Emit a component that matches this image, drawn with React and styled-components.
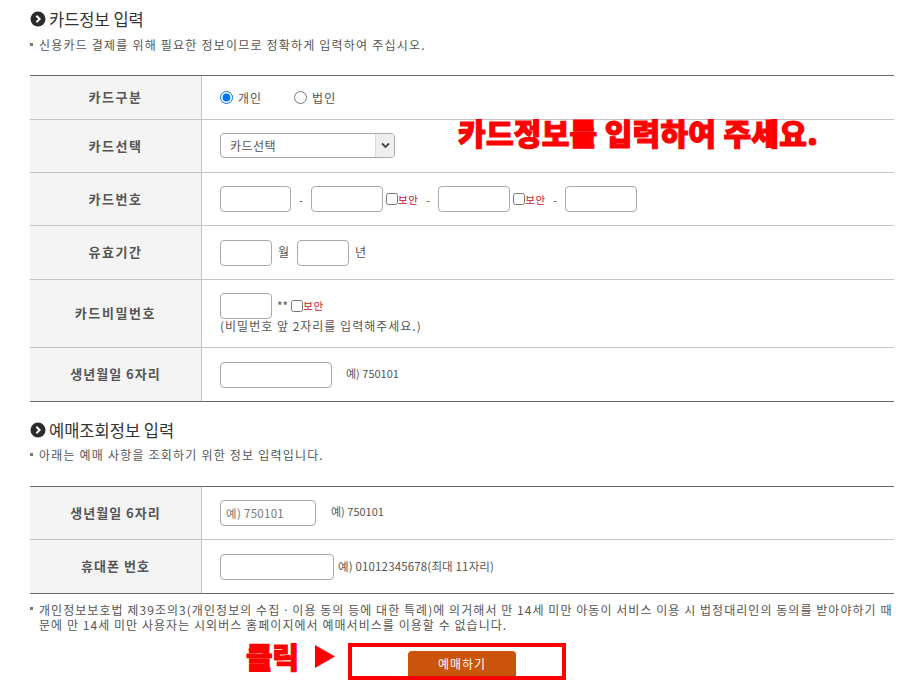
import React from "react";
import styled, { createGlobalStyle } from "styled-components";

const Global = createGlobalStyle`
  html, body { margin: 0; padding: 0; background: #fff; height: 680px; overflow: hidden; }
  body { font-family: "Noto Sans CJK KR", "Liberation Sans", sans-serif; color: #555; font-size: 12px; }
`;
const Page = styled.div`
  position: relative;
  width: 864px;
  height: 680px;
  margin-left: 30px;
  overflow: hidden;
`;
const Heading = styled.h2`
  display: flex;
  align-items: center;
  gap: 3px;
  margin: ${p => p.$top}px 0 0;
  height: 20px;
  font-size: 16.5px;
  font-weight: 400;
  color: #333;
  line-height: 20px;
`;
const Note = styled.p`
  margin: ${p => p.$top ?? 6}px 0 0;
  padding-left: 9px;
  position: relative;
  font-size: 12px;
  line-height: ${p => p.$lh ?? 14}px;
  height: ${p => p.$h ?? 14}px;
  color: #555;
  letter-spacing: ${p => p.$ls ?? 1.2}px;
  &::before {
    content: "";
    position: absolute;
    left: 0;
    top: 5px;
    width: 3px;
    height: 3px;
    background: #777;
  }
`;
const FormTable = styled.div`
  margin-top: ${p => p.$top}px;
  border-top: 1px solid #666;
  border-bottom: 1px solid #666;
`;
const Row = styled.div`
  display: grid;
  grid-template-columns: 172px 1fr;
  height: ${p => p.$h}px;
  & + & { border-top: 1px solid #c4c4c4; }
`;
const Label = styled.div`
  display: flex;
  align-items: center;
  justify-content: center;
  padding-bottom: 2px;
  background: #f4f4f4;
  border-right: 1px solid #c4c4c4;
  font-size: 13px;
  font-weight: 700;
  color: #555;
  letter-spacing: ${p => p.$ls ?? 1.6}px;
`;
const Cell = styled.div`
  display: flex;
  align-items: center;
  padding-left: 18px;
  font-size: 12px;
  color: #555;
`;
const Stack = styled.div`
  display: flex;
  flex-direction: column;
  padding-left: 18px;
  padding-top: 13px;
  font-size: 12px;
  line-height: 14px;
  color: #555;
  letter-spacing: 1px;
`;
const Line = styled.div`
  display: flex;
  align-items: center;
  letter-spacing: 0;
`;
const Input = styled.input`
  box-sizing: border-box;
  width: ${p => p.$w}px;
  height: ${p => p.$h ?? 26}px;
  margin-right: ${p => p.$mr ?? 0}px;
  padding: 0 5px;
  border: 1px solid #a9a9a9;
  border-radius: 4px;
  background: #fff;
  font: 11.5px "Noto Sans CJK KR", sans-serif;
  outline: none;
  &::placeholder { color: #777; opacity: 1; letter-spacing: 0.3px; }
`;
const RadioLabel = styled.label`
  display: inline-flex;
  align-items: center;
  margin-right: ${p => p.$mr}px;
  color: #555;
  letter-spacing: 1px;
`;
const Radio = styled.input`
  width: 13px;
  height: 13px;
  margin: 0 5px 0 0;
`;
const SelectBox = styled.div`
  box-sizing: border-box;
  display: flex;
  align-items: stretch;
  justify-content: space-between;
  width: 175px;
  height: 25px;
  margin-top: -1px;
  border: 1px solid #a9a9a9;
  border-radius: 4px;
  overflow: hidden;
`;
const SelectText = styled.span`
  padding-left: 9px;
  line-height: 23px;
  color: #555;
  letter-spacing: 0.5px;
`;
const SelectArrow = styled.span`
  display: flex;
  align-items: center;
  justify-content: center;
  width: 18px;
  background: #eee;
  border-left: 1px solid #ddd;
`;
const Dash = styled.span`
  width: ${p => p.$w}px;
  text-align: center;
  color: #666;
`;
const Secure = styled.label`
  display: inline-flex;
  align-items: center;
  color: #c8102e;
  font-size: 10.5px;
  letter-spacing: 0.5px;
`;
const Check = styled.input`
  box-sizing: border-box;
  width: 12px;
  height: 12px;
  margin: 0 0 0 3px;
`;
const Suffix = styled.span`
  margin: 0 ${p => p.$mr ?? 0}px 0 ${p => p.$ml}px;
  color: #555;
  font-size: ${p => p.$fs ?? 12}px;
  letter-spacing: ${p => p.$ls ?? 0}px;
  position: relative;
  top: ${p => p.$up ?? 0}px;
`;
const Footer = styled.div`
  display: flex;
  align-items: flex-start;
  margin-top: 11px;
  padding-left: 216px;
`;
const ClickText = styled.span`
  width: 69px;
  font-size: 29px;
  line-height: 26px;
  font-weight: 900;
  letter-spacing: -0.5px;
  color: #f00;
  -webkit-text-stroke: 1.2px #f00;
`;
const ArrowMark = styled.svg`
  display: block;
  flex: none;
  width: 20px;
  height: 23px;
  margin-top: 2px;
`;
const BuyFrame = styled.div`
  box-sizing: border-box;
  display: flex;
  justify-content: center;
  align-items: flex-end;
  width: 218px;
  height: 37px;
  margin-left: 13px;
  padding-left: 10px;
  border: 4px solid #f00;
`;
const BuyButton = styled.button`
  width: 108px;
  height: 25px;
  margin: 0;
  padding: 0;
  border: 0;
  border-radius: 4px 4px 0 0;
  background: #c9540a;
  color: #fff;
  font: 12px "Noto Sans CJK KR", sans-serif;
  letter-spacing: 1px;
`;
const Callout = styled.div`
  position: absolute;
  left: 428px;
  top: 114px;
  font-size: 30px;
  line-height: 36px;
  font-weight: 900;
  color: #f00;
  white-space: nowrap;
  letter-spacing: 0.3px;
  -webkit-text-stroke: 1.2px #f00;
`;

const Bullet = () => (
  <svg width="16" height="16" viewBox="0 0 16 16">
    <circle cx="8" cy="8" r="7.5" fill="#2b2b2b" />
    <path d="M6.4 4.8 9.6 8l-3.2 3.2" fill="none" stroke="#fff" strokeWidth="2" />
  </svg>
);
const Chevron = () => (
  <svg width="9" height="7" viewBox="0 0 9 7">
    <path d="M1 1.5 4.5 5 8 1.5" fill="none" stroke="#444" strokeWidth="1.8" />
  </svg>
);
const Arrow = () => (
  <ArrowMark viewBox="0 0 20 23">
    <path d="M0 0 20 11.5 0 23z" fill="#f00" />
  </ArrowMark>
);
const SecureBox = () => (
  <Secure>
    <Check type="checkbox" />
    보안
  </Secure>
);

export default function App() {
  return (
    <Page>
      <Global />
      <Heading $top={9}>
        <Bullet />
        카드정보 입력
      </Heading>
      <Note $top={9}>신용카드 결제를 위해 필요한 정보이므로 정확하게 입력하여 주십시오.</Note>
      <FormTable $top={23}>
        <Row $h={43}>
          <Label>카드구분</Label>
          <Cell>
            <RadioLabel $mr={32}>
              <Radio type="radio" name="kind" defaultChecked />
              개인
            </RadioLabel>
            <RadioLabel $mr={0}>
              <Radio type="radio" name="kind" />
              법인
            </RadioLabel>
          </Cell>
        </Row>
        <Row $h={52}>
          <Label>카드선택</Label>
          <Cell>
            <SelectBox>
              <SelectText>카드선택</SelectText>
              <SelectArrow>
                <Chevron />
              </SelectArrow>
            </SelectBox>
          </Cell>
        </Row>
        <Row $h={52}>
          <Label>카드번호</Label>
          <Cell>
            <Input $w={71} />
            <Dash $w={20}>-</Dash>
            <Input $w={72} />
            <SecureBox />
            <Dash $w={20}>-</Dash>
            <Input $w={72} />
            <SecureBox />
            <Dash $w={19}>-</Dash>
            <Input $w={72} />
          </Cell>
        </Row>
        <Row $h={53}>
          <Label>유효기간</Label>
          <Cell>
            <Input $w={52} />
            <Suffix $ml={6} $mr={8} $up={-1}>월</Suffix>
            <Input $w={52} />
            <Suffix $ml={6} $up={-1}>년</Suffix>
          </Cell>
        </Row>
        <Row $h={67}>
          <Label $ls={1.6}>카드비밀번호</Label>
          <Stack>
            <Line>
              <Input $w={52} />
              <Suffix $ml={5}>**</Suffix>
              <SecureBox />
            </Line>
            <span>(비밀번호 앞 2자리를 입력해주세요.)</span>
          </Stack>
        </Row>
        <Row $h={53}>
          <Label $ls={1}>생년월일 6자리</Label>
          <Cell>
            <Input $w={112} />
            <Suffix $ml={14} $fs={11} $up={-2}>예) 750101</Suffix>
          </Cell>
        </Row>
      </FormTable>
      <Heading $top={18}>
        <Bullet />
        예매조회정보 입력
      </Heading>
      <Note $top={8}>아래는 예매 사항을 조회하기 위한 정보 입력입니다.</Note>
      <FormTable $top={24}>
        <Row $h={52}>
          <Label $ls={1}>생년월일 6자리</Label>
          <Cell>
            <Input $w={96} placeholder="예) 750101" />
            <Suffix $ml={15} $fs={11} $up={-2}>예) 750101</Suffix>
          </Cell>
        </Row>
        <Row $h={53}>
          <Label $ls={1}>휴대폰 번호</Label>
          <Cell>
            <Input $w={114} />
            <Suffix $ml={4} $fs={11.5} $ls={0.15} $up={-1}>예) 01012345678(최대 11자리)</Suffix>
          </Cell>
        </Row>
      </FormTable>
      <Note $top={8} $h={30} $lh={15} $ls={1.05}>
        개인정보보호법 제39조의3(개인정보의 수집ㆍ이용 동의 등에 대한 특례)에 의거해서 만 14세 미만 아동이 서비스 이용 시 법정대리인의 동의를 받아야하기 때문에 만 14세 미만 사용자는 시외버스 홈페이지에서 예매서비스를 이용할 수 없습니다.
      </Note>
      <Footer>
        <ClickText>클릭</ClickText>
        <Arrow />
        <BuyFrame>
          <BuyButton>예매하기</BuyButton>
        </BuyFrame>
      </Footer>
      <Callout>카드정보를 입력하여 주세요.</Callout>
    </Page>
  );
}
